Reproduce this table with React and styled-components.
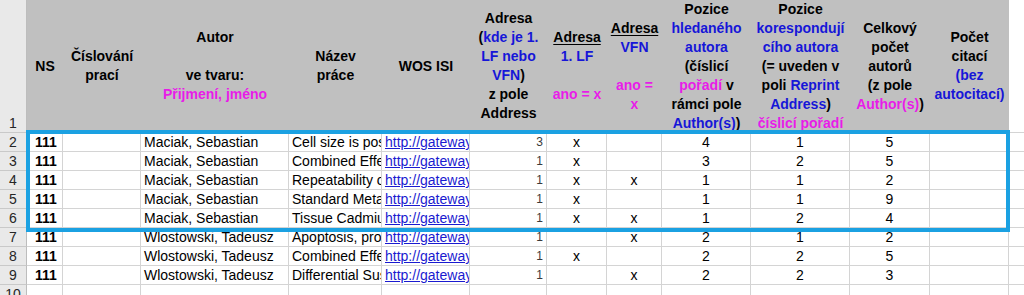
import React from "react";
import styled, { createGlobalStyle } from "styled-components";

const GlobalStyle = createGlobalStyle`
  html, body { margin: 0; padding: 0; background: #ffffff; overflow: hidden; }
  body { font-family: "Liberation Sans", Arial, sans-serif; }
`;

const COLS = [27, 36, 78, 148, 93, 88, 77, 60, 55, 89, 99, 80, 79];

const Sheet = styled.div`
  position: relative;
  width: 1024px;
  height: 295px;
  overflow: hidden;
`;

const Grid = styled.div`
  display: grid;
  grid-template-columns: ${COLS.map((c) => c + "px").join(" ")} 60px;
  grid-template-rows: 133px repeat(9, 19px);
  font-family: "Liberation Sans", Arial, sans-serif;
  font-size: 14px;
  color: #000;
`;

const RowHead = styled.div`
  box-sizing: border-box;
  background: #e9e9e9;
  border-right: 1px solid #bdbdbd;
  border-bottom: 1px solid #c9c9c9;
  color: #262626;
  font-size: 14px;
  line-height: 18px;
  display: flex;
  align-items: flex-end;
  justify-content: center;
`;

const HeadCell = styled.div`
  box-sizing: border-box;
  background: ${(p) => (p.$blank ? "#ffffff" : "#c0c0c0")};
  border-bottom: 1px solid ${(p) => (p.$blank ? "#d4d4d4" : "#b4b4b4")};
  display: flex;
  flex-direction: column;
  align-items: center;
  justify-content: center;
  text-align: center;
  font-weight: bold;
  font-size: 14px;
  line-height: 19px;
  white-space: nowrap;
  overflow: hidden;
`;

const HeadLine = styled.div`
  height: 19px;
`;

const Seg = styled.span`
  color: ${(p) => (p.$c === "b" ? "#1616d8" : p.$c === "m" ? "#e81ce8" : "#000")};
  text-decoration: ${(p) => (p.$u ? "underline" : "none")};
  text-underline-offset: 2px;
`;

const Cell = styled.div`
  box-sizing: border-box;
  border-right: 1px solid #d4d4d4;
  border-bottom: 1px solid #d4d4d4;
  padding: 0 ${(p) => (p.$small ? "3px" : "3px")} 0 ${(p) => (p.$indent ? "8px" : "3px")};
  white-space: nowrap;
  overflow: hidden;
  line-height: 18px;
  text-align: ${(p) => p.$align || "left"};
  font-weight: ${(p) => (p.$bold ? "bold" : "normal")};
  font-size: ${(p) => (p.$small ? "12px" : "14px")};
  color: ${(p) => (p.$small ? "#3a3a3a" : "#000")};
`;

const Link = styled.span`
  color: #1a1ad0;
  text-decoration: underline;
`;

const Selection = styled.div`
  position: absolute;
  left: 26px;
  top: 130px;
  width: 984px;
  height: 102px;
  box-sizing: border-box;
  border: 4px solid #1ba1e2;
  pointer-events: none;
`;

// header definitions: array of lines, each line array of [text, color, underline]
const HEADERS = [
  [[["NS"]]],
  [[["Číslování"]], [["prací"]]],
  [[["Autor"]], [], [["ve tvaru:"]], [["Přijmení, jméno", "m"]]],
  [[["Název"]], [["práce"]]],
  [[["WOS ISI"]]],
  [
    [["Adresa"]],
    [["("], ["kde je 1.", "b"]],
    [["LF nebo", "b"]],
    [["VFN", "b"], [")"]],
    [["z pole"]],
    [["Address"]],
  ],
  [[["Adresa", "k", true]], [["1. LF", "b"]], [], [["ano = x", "m"]]],
  [[["Adresa", "k", true]], [["VFN", "b"]], [], [["ano =", "m"]], [["x", "m"]]],
  [
    [["Pozice"]],
    [["hledaného", "b"]],
    [["autora", "b"]],
    [["(číslicí"]],
    [["pořadí", "m"], [" v"]],
    [["rámci pole"]],
    [["Author(s)", "b"], [")"]],
  ],
  [
    [["Pozice"]],
    [["korespondují", "b"]],
    [["cího autora", "b"]],
    [["(= uveden v"]],
    [["poli "], ["Reprint", "b"]],
    [["Address", "b"], [")"]],
    [["číslicí pořadí", "m"]],
  ],
  [[["Celkový"]], [["počet"]], [["autorů"]], [["(z pole"]], [["Author(s)", "m"], [")"]]],
  [[["Počet"]], [["citací"]], [["(bez", "b"]], [["autocitací)", "b"]]],
];

const ROWS = [
  ["Maciak, Sebastian", "Cell size is positively correlated", "3", "x", "", "4", "1", "5"],
  ["Maciak, Sebastian", "Combined Effects of Cadmium", "1", "x", "", "3", "2", "5"],
  ["Maciak, Sebastian", "Repeatability of metabolic rate", "1", "x", "x", "1", "1", "2"],
  ["Maciak, Sebastian", "Standard Metabolic Rate", "1", "x", "", "1", "1", "9"],
  ["Maciak, Sebastian", "Tissue Cadmium Concentration", "1", "x", "x", "1", "2", "4"],
  ["Wlostowski, Tadeusz", "Apoptosis, proliferation", "1", "", "x", "2", "1", "2"],
  ["Wlostowski, Tadeusz", "Combined Effects of Cadmium", "1", "x", "", "2", "2", "5"],
  ["Wlostowski, Tadeusz", "Differential Susceptibility", "1", "", "x", "2", "2", "3"],
];

function Header({ lines }) {
  return (
    <HeadCell>
      {lines.map((line, i) => (
        <HeadLine key={i}>
          {line.map(([t, c, u], j) => (
            <Seg key={j} $c={c} $u={u}>
              {t}
            </Seg>
          ))}
        </HeadLine>
      ))}
    </HeadCell>
  );
}

function DataRow({ n, row }) {
  const [autor, nazev, adr, lf, vfn, poz, kor, celk] = row || [];
  const empty = !row;
  return (
    <>
      <RowHead>{n}</RowHead>
      <Cell $bold $indent>{empty ? "" : "111"}</Cell>
      <Cell />
      <Cell>{autor}</Cell>
      <Cell>{nazev}</Cell>
      <Cell>{empty ? "" : <Link>http://gateway.isiknowledge</Link>}</Cell>
      <Cell $align="right" $small>
        {adr}
      </Cell>
      <Cell $align="center">{lf}</Cell>
      <Cell $align="center">{vfn}</Cell>
      <Cell $align="center">{poz}</Cell>
      <Cell $align="center">{kor}</Cell>
      <Cell $align="center">{celk}</Cell>
      <Cell />
      <Cell />
    </>
  );
}

export default function App() {
  return (
    <>
      <GlobalStyle />
      <Sheet>
        <Grid>
          <RowHead>1</RowHead>
          {HEADERS.map((h, i) => (
            <Header key={i} lines={h} />
          ))}
          <HeadCell $blank />
          {ROWS.map((r, i) => (
            <DataRow key={i} n={i + 2} row={r} />
          ))}
          <DataRow n={10} />
        </Grid>
        <Selection />
      </Sheet>
    </>
  );
}
